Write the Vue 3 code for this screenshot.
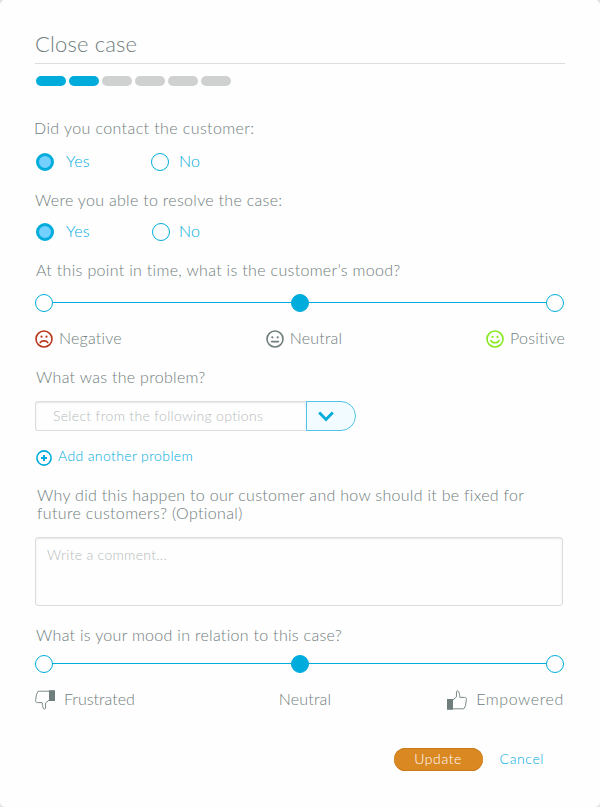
<script setup>
import { ref } from 'vue'

const steps = 6
const currentStep = 2

const yesNo = ref([
  { id: 'contacted', question: 'Did you contact the customer:', answer: 'Yes' },
  { id: 'resolved', question: 'Were you able to resolve the case:', answer: 'Yes' }
])
const customerMood = ref(1)
const ownMood = ref(1)
</script>

<template>
  <main class="dialog">
    <header class="head"><h1>Close case</h1></header>

    <div class="progress">
      <span v-for="n in steps" :key="n" class="step" :class="{ done: n <= currentStep }"></span>
    </div>

    <section v-for="q in yesNo" :key="q.id" class="yesno" :class="q.id">
      <p class="question">{{ q.question }}</p>
      <div class="radios">
        <div v-for="opt in ['Yes', 'No']" :key="opt" class="radio" @click="q.answer = opt">
          <span class="dot" :class="{ on: q.answer === opt }"></span>
          <span class="radio-label">{{ opt }}</span>
        </div>
      </div>
    </section>

    <section class="mood">
      <p class="question q-mood">At this point in time, what is the customer’s mood?</p>
      <div class="slider">
        <span v-for="i in 3" :key="i" class="knob" :class="{ on: customerMood === i - 1 }" @click="customerMood = i - 1"></span>
      </div>
      <div class="scale">
        <div class="mark">
          <svg class="face negative" viewBox="0 0 18 18">
            <circle cx="9" cy="9" r="8" />
            <path d="M5.2 12.6C6.4 10.3 11.6 10.3 12.8 12.6" />
            <circle class="eye" cx="6.5" cy="6.7" r="1.1" />
            <circle class="eye" cx="11.5" cy="6.7" r="1.1" />
          </svg>
          <span>Negative</span>
        </div>
        <div class="mark">
          <svg class="face neutral" viewBox="0 0 18 18">
            <circle cx="9" cy="9" r="8" />
            <path d="M5.6 11.6H12.4" />
            <circle class="eye" cx="6.3" cy="7.3" r="1.1" />
            <circle class="eye" cx="11.7" cy="7.3" r="1.1" />
          </svg>
          <span>Neutral</span>
        </div>
        <div class="mark">
          <svg class="face positive" viewBox="0 0 18 18">
            <circle cx="9" cy="9" r="8" />
            <path d="M4.9 10.6C6.2 13.4 11.8 13.4 13.1 10.6" />
            <circle class="eye" cx="6.5" cy="6.9" r="1.1" />
            <circle class="eye" cx="11.5" cy="6.9" r="1.1" />
          </svg>
          <span>Positive</span>
        </div>
      </div>
    </section>

    <section class="problem">
      <p class="question">What was the problem?</p>
      <div class="select">
        <div class="select-value">Select from the following options</div>
        <div class="select-toggle">
          <svg class="chevron" viewBox="0 0 16 11"><path d="M1.2 1.6L8 8.6L14.8 1.6" /></svg>
        </div>
      </div>
      <div class="add">
        <svg class="plus" viewBox="0 0 16 16">
          <circle cx="8" cy="8" r="7.1" />
          <path class="cross" d="M8 5V11M5 8H11" />
        </svg>
        <span>Add another problem</span>
      </div>
    </section>

    <section class="reason">
      <p class="question">Why did this happen to our customer and how should it be fixed for<br><span class="second">future customers? (Optional)</span></p>
      <div class="comment">Write a comment...</div>
    </section>

    <section class="own-mood">
      <p class="question">What is your mood in relation to this case?</p>
      <div class="slider">
        <span v-for="i in 3" :key="i" class="knob" :class="{ on: ownMood === i - 1 }" @click="ownMood = i - 1"></span>
      </div>
      <div class="scale">
        <div class="mark frustrated">
          <svg class="thumb down" viewBox="0 0 20 20">
            <path class="cuff" d="M0 9H6V19.8H0Z" />
            <path class="hand" d="M6 9.8L9.4 7L9.5 1.6C9.8 .6 11.2 .6 11.7 1.7C12.6 3.6 12.6 5.2 12.9 7.4H17.6C18.9 7.5 19.5 8.3 19.4 9.5L18.5 15.8L16.8 18.8H6" />
          </svg>
          <span>Frustrated</span>
        </div>
        <div class="mark middle"><span>Neutral</span></div>
        <div class="mark empowered">
          <svg class="thumb" viewBox="0 0 20 20">
            <path class="cuff" d="M0 9H6V19.8H0Z" />
            <path class="hand" d="M6 9.8L9.4 7L9.5 1.6C9.8 .6 11.2 .6 11.7 1.7C12.6 3.6 12.6 5.2 12.9 7.4H17.6C18.9 7.5 19.5 8.3 19.4 9.5L18.5 15.8L16.8 18.8H6" />
          </svg>
          <span>Empowered</span>
        </div>
      </div>
    </section>

    <footer class="actions">
      <button class="update" type="button">Update</button>
      <a class="cancel">Cancel</a>
    </footer>
  </main>
</template>

<style>
body { background: #dfe2e2; }
</style>

<style scoped>
.dialog {
  box-sizing: border-box;
  width: 600px;
  height: 807px;
  padding: 30px 35px 0;
  border-radius: 5px;
  background: #fefefe;
  color: #6f7d7c;
  font: 300 16px/18px Lato, "Open Sans", sans-serif;
  letter-spacing: 0.3px;
}
.head { border-bottom: 1px solid #dcdede; }
h1 { margin: 0; font-size: 22px; line-height: 26px; padding: 1px 0 6px; font-weight: 300; letter-spacing: 0.15px; }
.progress { display: flex; gap: 3px; margin: 12px 0 0 1px; }
.step { width: 30px; height: 10px; border-radius: 5px; background: #cfd1d0; }
.step.done { background: #00acdb; }

.question { margin: 0; }
.contacted { margin-top: 33px; }
.contacted .question { margin-left: -1px; letter-spacing: 0.4px; }
.resolved { margin-top: 20px; }
.radios { display: grid; grid-template-columns: 115px 120px; margin: 16px 0 0 1px; height: 18px; }
.resolved .radios { margin-top: 14px; grid-template-columns: 116px 120px; }
.radio { display: flex; gap: 12px; color: #00acdb; line-height: 16px; cursor: pointer; }
.radio + .radio { gap: 10px; }
.resolved .radio + .radio { gap: 9px; }
.dot { box-sizing: border-box; width: 18px; height: 18px; border: 1px solid #00acdb; border-radius: 50%; }
.dot.on { border-width: 3px; background: #74d1ff; }

.mood { margin-top: 20px; }
.q-mood { margin-left: 1px; letter-spacing: 0.32px; }
.slider {
  display: flex;
  justify-content: space-between;
  height: 18px;
  width: 529px;
  margin-top: 15px;
  background: linear-gradient(#00acdb, #00acdb) 0 8px / 100% 1px no-repeat;
}
.knob { box-sizing: border-box; width: 18px; height: 18px; border: 1px solid #00acdb; border-radius: 50%; background: #fefefe; }
.knob.on { background: #00acdb; }
.scale { display: flex; justify-content: space-between; margin-top: 17px; width: 530px; height: 20px; }
.mark { display: flex; gap: 6px; letter-spacing: 0.2px; }
.face { width: 18px; height: 18px; margin-top: 1px; fill: none; stroke: currentColor; stroke-width: 1.6; stroke-linecap: round; }
.eye { fill: currentColor; stroke: none; }
.negative { color: #b7371a; }
.neutral { color: #6f7d7c; }
.positive { color: #86e81f; }

.problem { margin-top: 19px; }
.problem .question { margin-left: 1px; }
.select { display: flex; margin-top: 15px; width: 321px; height: 30px; font-size: 14px; letter-spacing: 0.32px; }
.select-value {
  box-sizing: border-box;
  width: 271px;
  padding: 5px 0 0 17px;
  border: 1px solid #dcdede;
  border-right: 0;
  border-radius: 3px 0 0 3px;
  box-shadow: inset 0 1px 2px #e4e6e6;
  color: #b5bcbb;
}
.select-toggle {
  box-sizing: border-box;
  width: 50px;
  padding: 9px 0 0 11px;
  border: 1px solid #4fc4e4;
  border-radius: 0 15px 15px 0;
  background: #f2fbff;
}
.chevron { display: block; width: 16px; height: 11px; fill: none; stroke: #00acdb; stroke-width: 2.8; }
.add { display: flex; gap: 6px; margin: 16px 0 0 1px; font-size: 14px; color: #00acdb; letter-spacing: 0.37px; }
.plus { width: 16px; height: 16px; margin-top: 3px; fill: none; stroke: #00acdb; stroke-width: 1.6; }
.cross { stroke-width: 2; }

.reason { margin-top: 20px; }
.reason .question { margin-left: 2px; white-space: nowrap; }
.second { letter-spacing: 0.35px; }
.comment {
  box-sizing: border-box;
  width: 528px;
  height: 69px;
  margin-top: 15px;
  padding: 8px 11px;
  border: 1px solid #dcdede;
  border-radius: 3px;
  box-shadow: inset 0 1px 2px #e4e6e6;
  font-size: 14px;
  color: #b5bcbb;
}

.own-mood { margin-top: 20px; }
.own-mood .question { margin-left: 1px; }
.own-mood .slider { margin-top: 11px; }
.thumb { width: 20px; height: 20px; }
.down { transform: rotate(180deg); }
.cuff { fill: #6f7d7c; }
.hand { fill: none; stroke: #7d8a89; stroke-width: 1; stroke-linejoin: round; }
.frustrated { gap: 9px; letter-spacing: 0; }
.middle { padding-left: 28px; }
.empowered { gap: 9px; letter-spacing: 0.6px; padding-right: 1px; }

.actions { display: flex; justify-content: flex-end; gap: 17px; margin: 38px 21px 0 0; font-size: 14px; letter-spacing: 0.6px; }
.update {
  width: 89px;
  height: 23px;
  padding: 0 0 2px;
  border: 0;
  border-radius: 12px;
  background: #da8822;
  box-shadow: inset 0 1px 0 #c97b1c, inset 0 -1px 0 #c97b1c;
  color: #fff;
  font: inherit;
  letter-spacing: inherit;
}
.cancel { color: #00acdb; line-height: 22px; }
</style>
